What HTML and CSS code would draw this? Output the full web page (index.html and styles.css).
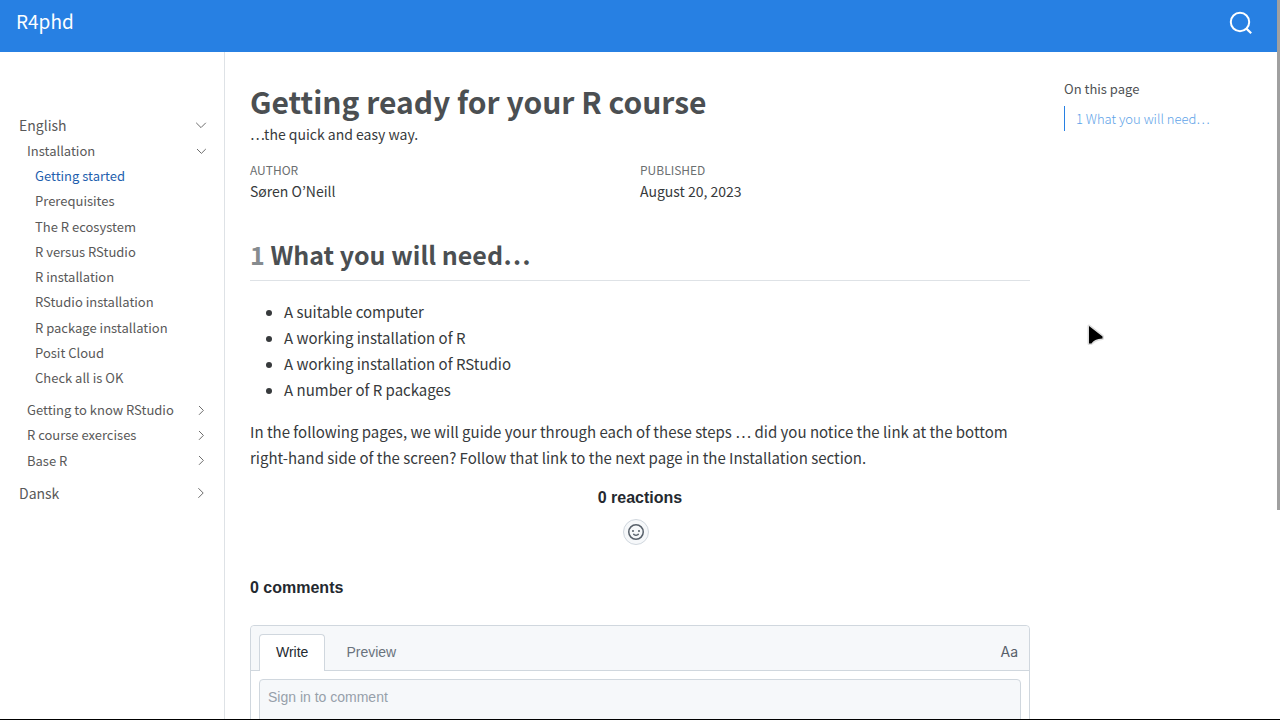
FILE: index.html
```html
<!DOCTYPE html>
<html lang="en">
<head>
<meta charset="utf-8">
<meta name="viewport" content="width=device-width, initial-scale=1">
<title>R4phd - Getting ready for your R course</title>
<link rel="stylesheet" href="styles.css">
</head>
<body>
<header class="navbar">
  <a class="brand" href="#">R4phd</a>
  <button class="search" type="button" aria-label="Search">
    <svg width="24" height="24" viewBox="0 0 24 24" fill="none" stroke="currentColor" stroke-width="2"><circle cx="11" cy="11" r="9.2"/><path d="M17.2 17.4l5 4.8" stroke-width="2.2"/></svg>
  </button>
</header>
<div class="layout">
  <nav class="sidebar" aria-label="Chapters">
    <ul class="level level-1">
      <li>
        <div class="row"><a href="#">English</a><button class="toggle" type="button" aria-label="Collapse English"><svg width="12" height="12" viewBox="0 0 12 12"><path d="M1.2 3.8L6 8.6l4.8-4.8"/></svg></button></div>
        <ul class="level level-2">
          <li>
            <div class="row"><a href="#">Installation</a><button class="toggle" type="button" aria-label="Collapse Installation"><svg width="12" height="12" viewBox="0 0 12 12"><path d="M2 4l4.4 4.4L10.800 4"/></svg></button></div>
            <ul class="level level-3">
              <li><a class="active" href="#">Getting started</a></li>
              <li><a href="#">Prerequisites</a></li>
              <li><a href="#">The R ecosystem</a></li>
              <li><a href="#">R versus RStudio</a></li>
              <li><a href="#">R installation</a></li>
              <li><a href="#">RStudio installation</a></li>
              <li><a href="#">R package installation</a></li>
              <li><a href="#">Posit Cloud</a></li>
              <li><a href="#">Check all is OK</a></li>
            </ul>
          </li>
          <li><div class="row"><a href="#">Getting to know RStudio</a><button class="toggle" type="button" aria-label="Expand Getting to know RStudio"><svg width="12" height="12" viewBox="0 0 12 12"><path d="M4 2l4.400 4.400L4 10.800"/></svg></button></div></li>
          <li><div class="row"><a href="#">R course exercises</a><button class="toggle" type="button" aria-label="Expand R course exercises"><svg width="12" height="12" viewBox="0 0 12 12"><path d="M4 2l4.400 4.400L4 10.800"/></svg></button></div></li>
          <li><div class="row"><a href="#">Base R</a><button class="toggle" type="button" aria-label="Expand Base R"><svg width="12" height="12" viewBox="0 0 12 12"><path d="M4 2l4.400 4.400L4 10.800"/></svg></button></div></li>
        </ul>
      </li>
      <li><div class="row"><a href="#">Dansk</a><button class="toggle" type="button" aria-label="Expand Dansk"><svg width="12" height="12" viewBox="0 0 12 12"><path d="M3.400 1.200L8.200 6l-4.800 4.800"/></svg></button></div></li>
    </ul>
  </nav>
  <main class="content">
    <h1>Getting ready for your R course</h1>
    <p class="subtitle">…the quick and easy way.</p>
    <dl class="meta">
      <div><dt>AUTHOR</dt><dd>Søren O’Neill</dd></div>
      <div><dt>PUBLISHED</dt><dd>August 20, 2023</dd></div>
    </dl>
    <h2 id="need"><span class="number">1</span> What you will need…</h2>
    <ul class="bullets">
      <li>A suitable computer</li>
      <li>A working installation of R</li>
      <li>A working installation of RStudio</li>
      <li>A number of R packages</li>
    </ul>
    <p class="text">In the following pages, we will guide your through each of these steps … did you notice the link at the bottom right-hand side of the screen? Follow that link to the next page in the Installation section.</p>
    <section class="comments">
      <h3 class="reactions">0 reactions</h3>
      <button class="emoji" type="button" aria-label="Add reactions">
        <svg width="16" height="16" viewBox="0 0 16 16" fill="currentColor"><path fill-rule="evenodd" d="M1.500 8a6.500 6.500 0 1113 0 6.500 6.500 0 01-13 0zM8 0a8 8 0 100 16A8 8 0 008 0zM5 8a1 1 0 100-2 1 1 0 000 2zm7-1a1 1 0 11-2 0 1 1 0 012 0zM5.320 9.636a.75.75 0 011.038.175l.007.009c.103.118.22.222.35.310.264.178.683.370 1.285.370.602 0 1.020-.192 1.285-.371.130-.088.247-.192.350-.310l.007-.008a.75.75 0 111.222.870l-.614-.431c.614.430.614.431.613.431v.001l-.001.002-.002.003-.005.007-.014.019a1.984 1.984 0 01-.184.213c-.160.166-.338.316-.530.445-.630.418-1.370.638-2.127.629-.946 0-1.652-.308-2.126-.630a3.320 3.320 0 01-.715-.657l-.014-.020-.005-.006-.002-.003v-.002h-.001l.613-.432-.614.430a.75.75 0 01.183-1.044z"/></svg>
      </button>
      <h3>0 comments</h3>
      <form class="box">
        <div class="tabs">
          <button class="tab selected" type="button">Write</button>
          <button class="tab" type="button">Preview</button>
          <button class="font-toggle" type="button" aria-label="Enable fixed-width font">Aa</button>
        </div>
        <div class="editor"><textarea aria-label="Comment" placeholder="Sign in to comment" disabled></textarea></div>
      </form>
    </section>
  </main>
  <aside class="toc">
    <h2>On this page</h2>
    <a href="#need">1 What you will need…</a>
  </aside>
</div>
<div class="scroll-thumb"></div>
<div class="edge"></div>
<svg class="pointer" width="20" height="24" viewBox="0 0 20 24"><path d="M3 3v17.500h2.500c2-3 5-4.500 11-5v-2z" fill="#000" stroke="#ddd" stroke-width="3" stroke-linejoin="round" paint-order="stroke"/></svg>
</body>
</html>
```
FILE: styles.css
```css
* { box-sizing: border-box; }
html, body { height: 100%; }
body {
  margin: 0;
  overflow: hidden;
  background: #fff;
  color: #373a3c;
  font: 15px/26px "Noto Sans CJK SC", "Noto Sans", sans-serif;
}
h1, h2, h3, p, ul, dl, dd { margin: 0; padding: 0; }
a { color: inherit; text-decoration: none; }
button { margin: 0; padding: 0; border: 0; background: none; color: inherit; font: inherit; cursor: pointer; }
svg { display: block; }

.navbar {
  display: flex;
  align-items: center;
  justify-content: space-between;
  height: 52px;
  padding: 0 27px 10px 16px;
  background: #2780e3;
  color: #fdfeff;
}
.brand { font-size: 19px; }
.search { padding-top: 4px; }

.layout {
  display: grid;
  grid-template-columns: 225px minmax(0, 1fr) 216px;
  min-height: calc(100vh - 52px);
}

.sidebar {
  padding: 60px 17px 0 19px;
  border-right: 1px solid #dee2e6;
  color: #595959;
  font-size: 14px;
  line-height: 26px;
}
.level { list-style: none; }
.level-2, .level-3 { padding-bottom: 7px; padding-left: 8px; }
.level-2 { font-size: 13px; line-height: 1.94; }
.row { display: flex; align-items: center; justify-content: space-between; }
.toggle svg { fill: none; stroke: #6c6c6c; stroke-width: 1; }
.level a { display: block; }
.active { color: #1f5fae; }

.content { padding: 29px 34px 0 25px; }
.content h1 { color: #4b4f52; font-size: 30px; line-height: 40px; }
.subtitle { margin-top: 1px; font-size: 14px; line-height: 24px; }
.meta { display: grid; grid-template-columns: 1fr 1fr; margin-top: 13px; font: 14px/21px "Noto Sans CJK KR", "Noto Sans", sans-serif; }
.meta dt { padding-bottom: 1px; color: #6c6f71; font-size: 12px; }
.content h2 {
  margin-top: 32px;
  padding-bottom: 6px;
  border-bottom: 1px solid #dee2e6;
  color: #4b4f52;
  font-size: 25px;
  line-height: 40px;
}
.content h2 .number { color: #868b8f; }
.bullets { margin: 18px 0 16px; padding-left: 34px; }

.comments { margin-top: 15px; color: #24292f; font: 14px/21px "Liberation Sans", Arial, sans-serif; }
.comments h3 { font-size: 16px; line-height: 24px; }
.reactions { text-align: center; }
.emoji {
  display: grid;
  place-items: center;
  width: 26px;
  height: 26px;
  margin: 9px auto 31px;
  border: 1px solid #d0d7de;
  border-radius: 50%;
  background: #f6f8fa;
  color: #57606a;
  transform: translateX(-4px);
}
.box { margin-top: 25px; border: 1px solid #d0d7de; border-radius: 4px; }
.tabs { display: flex; align-items: flex-end; padding: 8px 8px 0; border-bottom: 1px solid #d0d7de; border-radius: 4px 4px 0 0; background: #f6f8fa; }
.tab { height: 36px; padding: 0 16px; border: 1px solid transparent; border-bottom: 0; color: #6a737d; }
.selected { margin-bottom: -1px; height: 37px; padding-bottom: 2px; border-color: #d0d7de; border-radius: 4px 4px 0 0; background: #fff; color: #24292f; }
.tab + .tab { margin-left: 4px; }
.font-toggle { margin-left: auto; padding: 0 3px; height: 36px; color: #57606a; font: 14px/36px Inter, sans-serif; }
.editor { padding: 8px; }
.editor textarea {
  display: block;
  width: 100%;
  height: 90px;
  padding: 7px 8px;
  border: 1px solid #d0d7de;
  border-radius: 4px;
  background: #f6f8fa;
  font: inherit;
  line-height: 20px;
  resize: none;
}
.editor textarea::placeholder { color: #97a0aa; }

.toc { padding: 24px 16px 0 0; font-size: 13px; line-height: 25px; }
.toc h2 { margin-bottom: 5px; color: #4f5254; font-size: 13px; font-weight: 400; }
.toc a { display: block; padding-left: 11px; border-left: 1px solid #2780e3; color: #5ea3e8; font-weight: 300; }

.scroll-thumb { position: fixed; top: 0; right: 0; width: 3px; height: 510px; background: #a0a0a0; }
.edge { position: fixed; right: 0; bottom: 0; left: 0; height: 1px; background: #000; }
.pointer { position: absolute; top: 323px; left: 1086px; }
```
